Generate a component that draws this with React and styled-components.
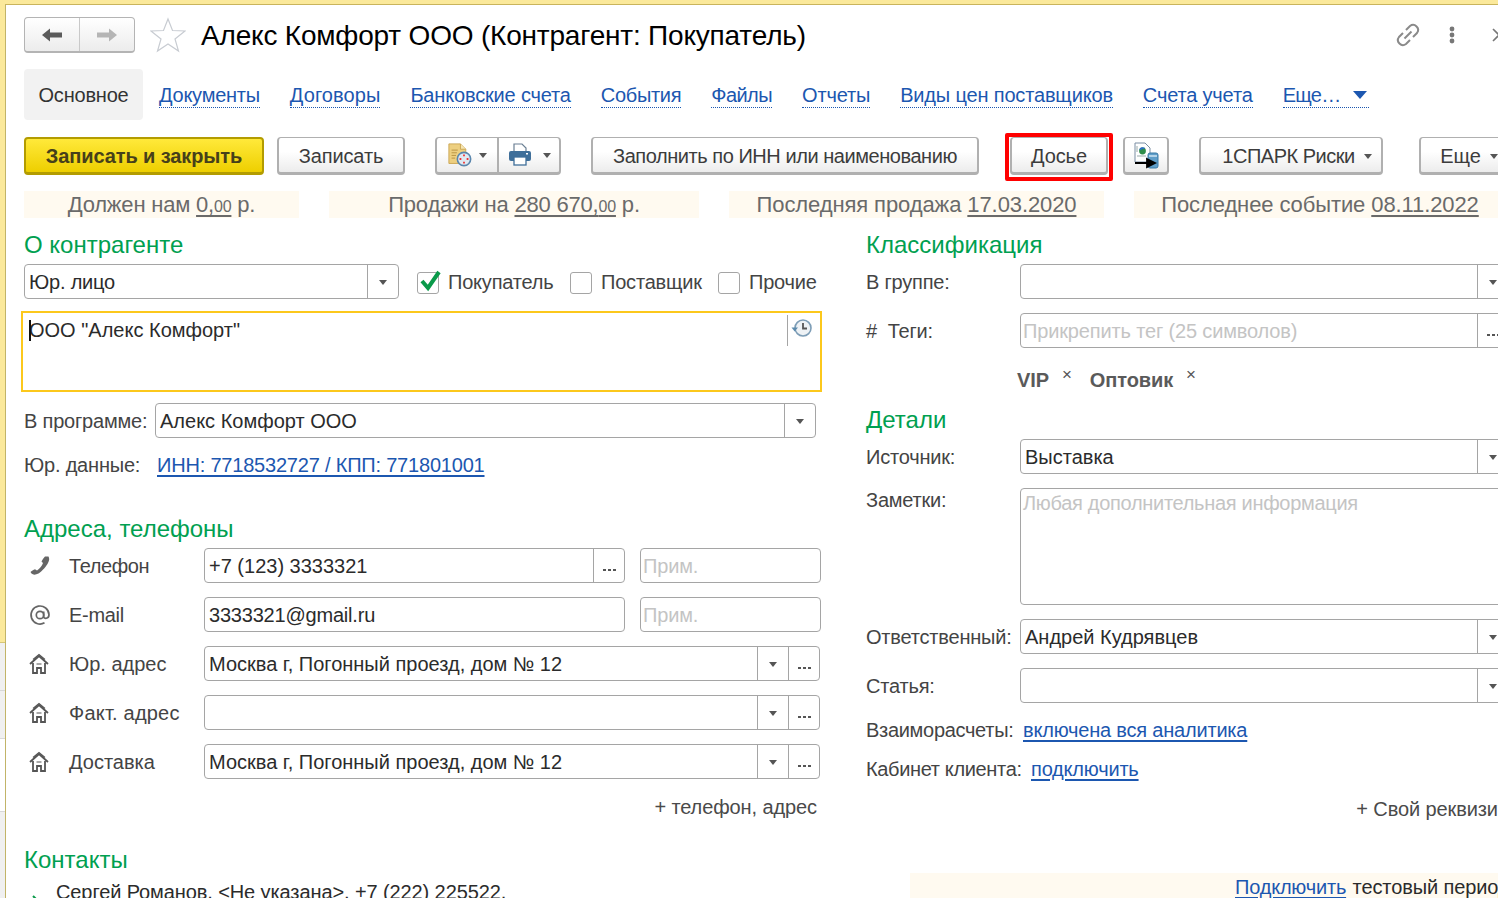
import React from "react";
import styled, { createGlobalStyle } from "styled-components";

const Global = createGlobalStyle`
  html, body { margin: 0; padding: 0; background: #fff; }
  body { font-family: "Liberation Sans", Arial, sans-serif; color: #3f3f3f; }
`;

const Page = styled.div`
  width: 1498px; height: 898px; overflow: hidden; display: flex; background: #fff;
  border-top: 4px solid #fbe99b; box-sizing: border-box; box-shadow: inset 0 1px 0 #c9b45c;
`;
const Rail = styled.div`
  width: 5px; flex: none; display: flex; flex-direction: column; border-right: 1px solid #c2b468;
`;
const RailYellow = styled.div` height: 638px; background: #fbe99b; border-bottom: 1px solid #d6c678; `;
const RailTab = styled.div` height: 47px; background: #f0f0f0; border-bottom: 1px solid #d8d8d8; `;
const RailGap = styled.div` height: 72px; background: #fff; border-bottom: 1px solid #d8d8d8; `;
const RailRest = styled.div` flex: 1; background: #f0f0f0; `;
const Main = styled.div` flex: 1; min-width: 0; padding-left: 18px; overflow: hidden; letter-spacing: -0.1px; `;

const Header = styled.div` height: 65px; display: flex; align-items: flex-start; padding-top: 13px; box-sizing: border-box; position: relative; `;
const NavGroup = styled.div`
  width: 111px; height: 36px; display: flex; box-sizing: border-box; border: 1px solid #b4b4b4; border-bottom-width: 2px; border-radius: 4px;
  background: linear-gradient(#fff, #ececec);
`;
const NavCell = styled.div` flex: 1; display: flex; align-items: center; justify-content: center; & + & { border-left: 1px solid #c9c9c9; } `;
const StarBox = styled.div` width: 36px; margin-left: 15px; height: 36px; `;
const Title = styled.div` margin-left: 15px; padding-top: 1px; font-size: 28px; line-height: 36px; letter-spacing: -0.19px; color: #000; white-space: nowrap; `;
const HeadIcons = styled.div` position: absolute; top: 13px; left: 1371px; display: flex; align-items: center; gap: 28px; height: 36px; `;
const CloseMark = styled.svg` margin-left: 9px; flex: none; `;

const Tabs = styled.div` height: 51px; display: flex; align-items: center; gap: 30px; `;
const ActiveTab = styled.div`
  width: 119px; height: 51px; margin-right: -14px; display: flex; align-items: center; justify-content: center; background: #f2f2f2; border-radius: 4px; font-size: 20px; letter-spacing: -0.2px; color: #333; padding-top: 1px; box-sizing: border-box;
`;
const TabLink = styled.a`
  font-size: 20px; line-height: 23px; margin-top: 2px; letter-spacing: ${p => p.$ls ?? -0.17}px; color: #1c57b0; border-bottom: 1px dotted #1c57b0; white-space: nowrap; display: flex; align-items: center;
`;
const MoreCaret = styled.span` display: inline-block; border-style: solid; border-color: #1c57b0 transparent transparent; border-width: 8px 7.5px 0; margin: 0 2px 0 12px; flex: none; `;

const Toolbar = styled.div` margin-top: 17px; height: 38px; display: flex; align-items: flex-start; `;
const Btn = styled.div`
  width: ${p => p.$w}px; margin-left: ${p => p.$ml || 0}px; flex: none; height: 38px; box-sizing: border-box;
  display: flex; align-items: center; justify-content: center; gap: 9px; padding: 2px 0 0 ${p => p.$pl || 0}px; font-size: 20px; color: #3c3c3c; white-space: nowrap;
  letter-spacing: ${p => p.$ls ?? -0.1}px;
  border: 2px solid #b0b0b0; border-top-width: 1px; border-bottom-width: 3px; border-radius: 4px; background: linear-gradient(#fff 40%, #ececec);
`;
const PrimaryBtn = styled(Btn)`
  font-weight: 700; color: #46401a; border: 2px solid #b39c00; border-bottom-width: 3px; background: linear-gradient(#ffe93a, #eecf00);
`;
const RedFrame = styled.div`
  margin-left: 26px; margin-top: -4px; width: 108px; height: 48px; box-sizing: border-box; display: flex; border: 4px solid #f00; padding: 0 1px; border-radius: 2px;
`;
const SplitBtn = styled(Btn)` padding: 0; gap: 0; `;
const SplitCell = styled.div` flex: 1; height: 100%; display: flex; align-items: center; justify-content: center; gap: ${p => p.$gap}px; & + & { border-left: 2px solid #b0b0b0; } `;
const Caret = styled.span` display: inline-block; border: 4px solid transparent; border-top: 5px solid #555; border-bottom: 0; margin-top: 1px; flex: none; `;

const InfoStrip = styled.div` margin-top: 16px; display: flex; gap: 30px; height: 27px; `;
const Info = styled.div`
  width: ${p => p.$w}px; flex: none; height: 27px; background: #fffaf0; font-size: 22px; line-height: 27px; text-align: center; color: #6a6a6a; white-space: nowrap;
  letter-spacing: ${p => p.$ls ?? -0.1}px;
  & u { text-underline-offset: 3px; }
  & small { font-size: 16px; }
`;

const Columns = styled.div` display: grid; grid-template-columns: 797px 650px; column-gap: 45px; margin-top: 14px; `;
const Col = styled.div` display: flex; flex-direction: column; `;
const Heading = styled.div` font-size: 24px; line-height: 26px; letter-spacing: 0; color: #00a050; margin-top: ${p => p.$mt || 0}px; `;
const Row = styled.div` display: flex; align-items: center; height: ${p => p.$h || 35}px; margin-top: ${p => p.$mt || 0}px; white-space: nowrap; font-size: 20px; `;
const TopRow = styled(Row)` align-items: flex-start; `;
const Label = styled.div` width: ${p => p.$w}px; flex: none; font-size: 20px; color: #444; padding-top: ${p => p.$pt ?? 1}px; line-height: 24px; letter-spacing: ${p => p.$ls ?? -0.2}px; `;
const Field = styled.div`
  width: ${p => p.$w}px; flex: none; margin-left: ${p => p.$ml || 0}px; height: ${p => p.$h || 35}px; box-sizing: border-box; display: flex; background: #fff;
  border: 1px solid #a5a5a5; border-radius: 4px; font-size: 20px; color: #2b2b2b; overflow: hidden;
`;
const FieldText = styled.div` flex: 1; padding: 0 4px; line-height: 35px; letter-spacing: ${p => p.$ls ?? 0}px; color: #2b2b2b; white-space: nowrap; overflow: hidden; `;
const Placeholder = styled(FieldText)` padding: 0 2px; color: #c4c4c4; letter-spacing: ${p => p.$ls ?? -0.15}px; line-height: ${p => p.$lh || 35}px; `;
const FieldBtn = styled.div` width: 30px; flex: none; display: flex; align-items: center; justify-content: center; border-left: 1px solid #a5a5a5; `;
const FieldBtnDots = styled(FieldBtn)` align-items: flex-end; padding-bottom: 11px; box-sizing: content-box; height: calc(100% - 11px); `;
const Dots = styled.span` display: block; width: 13px; height: 2px; background-image: linear-gradient(90deg, #555 3px, transparent 3px); background-size: 5px 2px; `;

const Check = styled.div`
  width: 22px; height: 22px; box-sizing: border-box; border: 1px solid #a5a5a5; border-radius: 3px; position: relative; flex: none; margin-left: ${p => p.$ml || 0}px; margin-right: 9px; margin-top: 2px;
`;
const CheckMark = styled.svg` position: absolute; left: 1px; top: -4px; `;
const NameArea = styled.div`
  margin: 12px 0 0 -3px; width: 801px; height: 81px; box-sizing: border-box; border: 2px solid #fcc81c; display: flex; justify-content: space-between; font-size: 20px; letter-spacing: 0; color: #2b2b2b; position: relative; background: #fff;
`;
const NameText = styled.div` padding: 5px 0 0 6px; line-height: 24px; `;
const Cursor = styled.span` position: absolute; left: 6px; top: 7px; width: 2px; height: 21px; background: #111; `;
const HistoryCell = styled.div` width: 33px; height: 31px; margin-top: 2px; border-left: 1px solid #a5a5a5; display: flex; align-items: flex-start; justify-content: center; padding: 3px 5px 0 0; box-sizing: border-box; `;
const DataLink = styled.a` font-size: 20px; padding-top: 1px; line-height: 24px; letter-spacing: -0.2px; color: #1c57b0; text-decoration: underline; text-underline-offset: 3px; `;
const IconCell = styled.div` width: 45px; flex: none; display: flex; align-items: center; padding-left: 5px; box-sizing: border-box; color: #666; `;
const AddLink = styled.div` text-align: right; font-size: 20px; color: #4a4a4a; line-height: 24px; margin-top: ${p => p.$mt}px; padding-right: ${p => p.$pr}px; white-space: nowrap; `;
const Tags = styled.div` display: flex; margin: 20px 0 0 151px; height: 24px; font-size: 20px; font-weight: 700; color: #5a5a5a; line-height: 24px; `;
const Tag = styled.div` margin-right: 18px; display: flex; `;
const TagX = styled.span` font-size: 17px; font-weight: 400; line-height: 14px; margin-left: 13px; color: #555; `;
const ContactLine = styled.div` display: flex; margin-top: 7px; font-size: 20px; color: #2b2b2b; white-space: nowrap; height: 24px; line-height: 24px; `;
const Chevron = styled.svg` margin: 15px 14px 0 8px; flex: none; `;
const Trial = styled.div` margin: 52px 0 0 44px; height: 30px; background: #fffaf0; padding-left: 325px; font-size: 20px; line-height: 28px; color: #2b2b2b; white-space: nowrap; & a { color: #1c57b0; letter-spacing: -0.2px; margin-right: 1px; text-decoration: underline; text-underline-offset: 3px; } `;

const Arrow = ({ c, flip }) => (
  <svg width="24" height="18" viewBox="0 0 24 18" style={flip ? { transform: "scaleX(-1)" } : undefined}>
    <path d="M2 9 L10 2.5 V6.5 H22 V11.5 H10 V15.5 Z" fill={c} />
  </svg>
);
const Star = () => (
  <svg width="36" height="36" viewBox="0 0 36 36"><path d="M18 2 L22.5 13.5 L35 14 L25 22 L28.5 34 L18 27 L7.5 34 L11 22 L1 14 L13.5 13.5 Z" fill="#fff" stroke="#c8ccd2" strokeWidth="1.2" /></svg>
);
const LinkIcon = () => (
  <svg width="26" height="26" viewBox="0 0 26 26" fill="none" stroke="#8a8a8a" strokeWidth="2"><path d="M11 8l4-4a5 5 0 0 1 7 7l-4 4" /><path d="M15 18l-4 4a5 5 0 0 1-7-7l4-4" /><path d="M9.5 16.5l7-7" /></svg>
);
const Kebab = () => (
  <svg width="6" height="18" viewBox="0 0 6 18" fill="#777"><circle cx="3" cy="3" r="2.4" /><circle cx="3" cy="9" r="2.4" /><circle cx="3" cy="15" r="2.4" /></svg>
);
const ReportIcon = () => (
  <svg width="24" height="24" viewBox="0 0 27 27">
    <path d="M1 1H14L20 7V23H1Z" fill="#edcf80" stroke="#c9a24e" />
    <path d="M14 1V7H20" fill="#f6e6b4" stroke="#c9a24e" />
    <path d="M4 8H11M4 11H10M4 14H9M4 17H8" stroke="#b58f3d" />
    <circle cx="18" cy="18" r="7.5" fill="#dfe9f2" stroke="#5a86ad" strokeWidth="1.8" />
    <path d="M18 13v2M18 21v2M13 18h2M21 18h2" stroke="#e33" strokeWidth="2" />
  </svg>
);
const PrinterIcon = () => (
  <svg width="24" height="24" viewBox="0 0 24 24">
    <path d="M6 9V1H14L18 5V9" fill="#fff" stroke="#6a7f93" strokeWidth="1.2" />
    <rect x="1" y="8" width="22" height="10" rx="2" fill="#3f6f9a" />
    <rect x="6" y="14" width="12" height="8" fill="#fff" stroke="#3f6f9a" strokeWidth="1.3" />
    <rect x="18" y="10" width="2" height="1.5" fill="#fff" />
  </svg>
);
const ExportIcon = () => (
  <svg width="26" height="28" viewBox="0 0 26 28">
    <path d="M2 1H12L17 6V20H2Z" fill="#fff" stroke="#7b8ea3" />
    <circle cx="9.5" cy="9" r="3.4" fill="#2f8e4a" /><path d="M7 8a3 3 0 0 1 4.5-1.4" stroke="#2b6fc4" strokeWidth="1.8" fill="none" />
    <path d="M4 4v6M4 14h9" stroke="#9aa" />
    <rect x="15" y="11" width="10" height="15" rx="2" fill="#5f9ec9" stroke="#3b7aa6" />
    <path d="M16 14h8" stroke="#cfe5f2" strokeWidth="1.5" />
    <path d="M2 21H17M14 17L22 21L14 25Z" stroke="#000" strokeWidth="1.8" fill="#000" />
  </svg>
);
const HistoryIcon = () => (
  <svg width="22" height="22" viewBox="0 0 22 22" fill="none">
    <circle cx="12" cy="10" r="8" fill="#eef2f5" stroke="#7d9db6" strokeWidth="1.6" />
    <path d="M12 5v5.5h4" stroke="#555" strokeWidth="1.8" />
    <path d="M0.5 9.5H7L3.7 13.5Z" fill="#5d8bad" />
  </svg>
);
const Phone = () => (
  <svg width="22" height="22" viewBox="0 0 22 22"><path d="M19.5 1.5c1 2 1 3.5-.5 6.500S13.5 16 9.5 18.500c-3 1.500-5.500 1.500-7 0L1.500 17c1-1 3-2.300 4.500-2.700l2 1.200c2.500-1.500 5-4.700 6-7.500L12.500 6.500c.7-1.700 2.500-4 3.500-5z" fill="#666" /></svg>
);
const AtSign = () => (
  <svg width="22" height="22" viewBox="0 0 22 22" fill="none" stroke="#666" strokeWidth="1.7"><circle cx="11" cy="11" r="3.7" /><path d="M14.700 7.500V12.800c0 2.400 5.300 2.200 5.300-2A9 9 0 1 0 15.500 18.800" /></svg>
);
const House = () => (
  <svg width="20" height="22" viewBox="0 0 20 22" fill="none" stroke="#555" strokeWidth="1.800"><path d="M1 11L10 3L19 11" /><path d="M4 6.500L10 1.500L16 6.500" strokeWidth="1.200" /><path d="M4 10V20H8V15H12V20H16V10" /><path d="M7.500 11h5" strokeWidth="2" stroke="#aaa" /></svg>
);

const Drop = () => <FieldBtn><Caret /></FieldBtn>;
const More = () => <FieldBtnDots><Dots /></FieldBtnDots>;

const tabs = [
  { t: "Документы", ls: -0.25 },
  { t: "Договоры", ls: 0.08 },
  { t: "Банковские счета" },
  { t: "События", ls: -0.3 },
  { t: "Файлы", ls: -0.55 },
  { t: "Отчеты" },
  { t: "Виды цен поставщиков" },
  { t: "Счета учета" },
];

const contactRows = [
  { icon: <Phone />, label: "Телефон", ls: -0.4, kind: "phone", value: "+7 (123) 3333321" },
  { icon: <AtSign />, label: "E-mail", ls: -0.3, kind: "mail", value: "3333321@gmail.ru", vls: -0.2 },
  { icon: <House />, label: "Юр. адрес", ls: 0, kind: "addr", value: "Москва г, Погонный проезд, дом № 12" },
  { icon: <House />, label: "Факт. адрес", ls: 0.2, kind: "addr", value: "" },
  { icon: <House />, label: "Доставка", ls: 0, kind: "addr", value: "Москва г, Погонный проезд, дом № 12" },
];

export default function App() {
  return (
    <>
      <Global />
      <Page>
        <Rail>
          <RailYellow /><RailTab /><RailTab /><RailGap /><RailRest />
        </Rail>
        <Main>
          <Header>
            <NavGroup>
              <NavCell><Arrow c="#5b5b5b" /></NavCell>
              <NavCell><Arrow c="#b5b5b5" flip /></NavCell>
            </NavGroup>
            <StarBox><Star /></StarBox>
            <Title>Алекс Комфорт ООО (Контрагент: Покупатель)</Title>
            <HeadIcons>
              <LinkIcon />
              <Kebab />
              <CloseMark width="14" height="14" viewBox="0 0 14 14"><path d="M1 1L13 13M13 1L1 13" stroke="#777" strokeWidth="1.600" /></CloseMark>
            </HeadIcons>
          </Header>
          <Tabs>
            <ActiveTab>Основное</ActiveTab>
            {tabs.map(({ t, ls }) => <TabLink key={t} $ls={ls}>{t}</TabLink>)}
            <TabLink $ls={-0.7}>Еще…<MoreCaret /></TabLink>
          </Tabs>
          <Toolbar>
            <PrimaryBtn $w={240}>Записать и закрыть</PrimaryBtn>
            <Btn $w={128} $ml={13}>Записать</Btn>
            <SplitBtn $w={126} $ml={30}>
              <SplitCell $gap={7}><ReportIcon /><Caret /></SplitCell>
              <SplitCell $gap={11}><PrinterIcon /><Caret /></SplitCell>
            </SplitBtn>
            <Btn $w={388} $ml={30} $ls={-0.45}>Заполнить по ИНН или наименованию</Btn>
            <RedFrame><Btn $w={98}>Досье</Btn></RedFrame>
            <Btn $w={46} $ml={10}><ExportIcon /></Btn>
            <Btn $w={184} $ml={30} $ls={-0.5} $pl={12}>1СПАРК Риски<Caret /></Btn>
            <Btn $w={100} $ml={36}>Еще<Caret /></Btn>
          </Toolbar>
          <InfoStrip>
            <Info $w={275} $ls={-0.2}>Должен нам <u>0,<small>00</small></u> р.</Info>
            <Info $w={370} $ls={-0.2}>Продажи на <u>280 670,<small>00</small></u> р.</Info>
            <Info $w={375}>Последняя продажа <u>17.03.2020</u></Info>
            <Info $w={372}>Последнее событие <u>08.11.2022</u></Info>
          </InfoStrip>
          <Columns>
            <Col>
              <Heading>О контрагенте</Heading>
              <Row $mt={6}>
                <Field $w={375}><FieldText $ls={-0.2}>Юр. лицо</FieldText><Drop /></Field>
                <Check $ml={18}><CheckMark width="24" height="24" viewBox="0 0 24 24"><path d="M3 12l6 7L20 3" fill="none" stroke="#0a9a4a" strokeWidth="4" /></CheckMark></Check>
                <Label $w={122}>Покупатель</Label>
                <Check />
                <Label $w={117}>Поставщик</Label>
                <Check />
                <Label $w={70}>Прочие</Label>
              </Row>
              <NameArea>
                <Cursor />
                <NameText>ООО "Алекс Комфорт"</NameText>
                <HistoryCell><HistoryIcon /></HistoryCell>
              </NameArea>
              <Row $mt={11}>
                <Label $w={131}>В программе:</Label>
                <Field $w={661}><FieldText>Алекс Комфорт ООО</FieldText><Drop /></Field>
              </Row>
              <Row $mt={9}>
                <Label $w={133}>Юр. данные:</Label>
                <DataLink>ИНН: 7718532727 / КПП: 771801001</DataLink>
              </Row>
              <Heading $mt={34}>Адреса, телефоны</Heading>
              {contactRows.map((r, i) => (
                <Row key={r.label} $mt={i === 0 ? 6 : 14}>
                  <IconCell>{r.icon}</IconCell>
                  <Label $w={135} $ls={r.ls}>{r.label}</Label>
                  {r.kind === "addr" ? (
                    <Field $w={616}><FieldText>{r.value}</FieldText><Drop /><More /></Field>
                  ) : (
                    <>
                      <Field $w={421}><FieldText $ls={r.vls}>{r.value}</FieldText>{r.kind === "phone" && <More />}</Field>
                      <Field $w={181} $ml={15}><Placeholder>Прим.</Placeholder></Field>
                    </>
                  )}
                </Row>
              ))}
              <AddLink $mt={16} $pr={4}>+ телефон, адрес</AddLink>
              <Heading $mt={28}>Контакты</Heading>
              <ContactLine>
                <Chevron width="10" height="10" viewBox="0 0 10 10"><path d="M1 1l6 6" stroke="#0a9a4a" strokeWidth="2" fill="none" /></Chevron>
                Сергей Романов, &lt;Не указана&gt;, +7 (222) 225522,
              </ContactLine>
            </Col>
            <Col>
              <Heading>Классификация</Heading>
              <Row $mt={6}>
                <Label $w={154}>В группе:</Label>
                <Field $w={489}><FieldText /><Drop /></Field>
              </Row>
              <Row $mt={14}>
                <Label $w={154}>#&nbsp;&nbsp;Теги:</Label>
                <Field $w={489}><Placeholder>Прикрепить тег (25 символов)</Placeholder><More /></Field>
              </Row>
              <Tags>
                <Tag>VIP<TagX>×</TagX></Tag>
                <Tag>Оптовик<TagX>×</TagX></Tag>
              </Tags>
              <Heading $mt={15}>Детали</Heading>
              <Row $mt={6}>
                <Label $w={154}>Источник:</Label>
                <Field $w={489}><FieldText>Выставка</FieldText><Drop /></Field>
              </Row>
              <TopRow $mt={14} $h={117}>
                <Label $w={154} $pt={0}>Заметки:</Label>
                <Field $w={490} $h={117}><Placeholder $ls={-0.3} $lh={28}>Любая дополнительная информация</Placeholder></Field>
              </TopRow>
              <Row $mt={14}>
                <Label $w={154}>Ответственный:</Label>
                <Field $w={489}><FieldText>Андрей Кудрявцев</FieldText><Drop /></Field>
              </Row>
              <Row $mt={14}>
                <Label $w={154}>Статья:</Label>
                <Field $w={489}><FieldText /><Drop /></Field>
              </Row>
              <Row $mt={9}>
                <Label $w={157} $ls={-0.3}>Взаиморасчеты:</Label>
                <DataLink>включена вся аналитика</DataLink>
              </Row>
              <Row $mt={4}>
                <Label $w={165} $ls={-0.35}>Кабинет клиента:</Label>
                <DataLink>подключить</DataLink>
              </Row>
              <AddLink $mt={11} $pr={9}>+ Свой реквизит</AddLink>
              <Trial><a>Подключить</a> тестовый период</Trial>
            </Col>
          </Columns>
        </Main>
      </Page>
    </>
  );
}
